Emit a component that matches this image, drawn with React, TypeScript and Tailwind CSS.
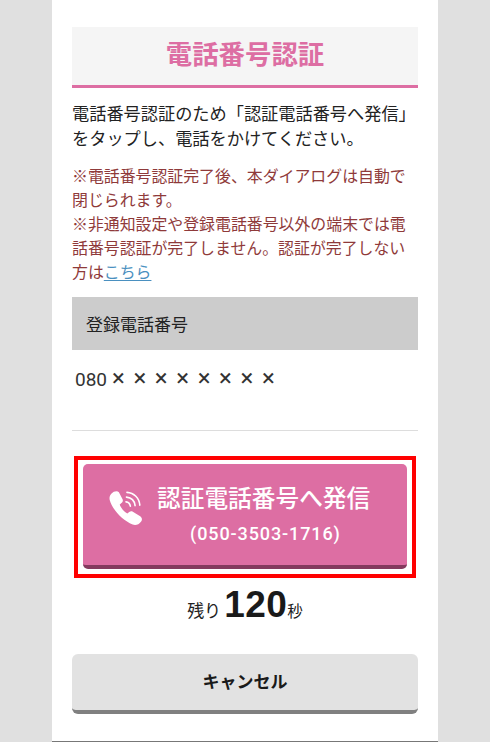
import React from "react";

const PhoneIcon = () => (
  <svg width="36" height="36" viewBox="0 0 36 38" className="shrink-0 mt-[26px]">
    {/* handset */}
    <path
      d="M2.5 4 C5 1.2 9 0.6 10.5 2.5 L14.5 10 C15 11.5 14.4 12.8 13.2 13.8 L11.4 15.4 C12 18 16 23.2 19.4 24.8 L21.4 23.2 C22.6 22.3 24 22.2 25.2 22.9 L33 27.6 C35 29 35.4 31.2 34 33.2 C31.6 36.6 28 37.6 25 36.4 C14 32 3.5 20.5 0.8 10.5 C0.2 8 1 5.6 2.5 4 Z"
      fill="#ffffff"
    />
    {/* signal arcs */}
    <path d="M18 12.5 C20.5 12.8 22.2 14.6 22.6 17" fill="none" stroke="#ffffff" strokeWidth="1.7" strokeLinecap="round" />
    <path d="M18.5 7.5 C23.5 8 27 11.5 27.6 16.5" fill="none" stroke="#ffffff" strokeWidth="1.7" strokeLinecap="round" />
    <path d="M19 2.5 C26.5 3 32 8.5 32.6 16" fill="none" stroke="#ffffff" strokeWidth="1.7" strokeLinecap="round" />
  </svg>
);

const App: React.FC = () => {
  return (
    <div className="w-[490px] h-[742px] overflow-hidden bg-[#e0e0e0] flex justify-center font-['Noto_Sans_CJK_JP','Noto_Sans',sans-serif]">
      <div className="w-[386px] h-[742px] bg-white px-5 pt-[27px] border-b border-[#777777] text-[#222222]">
        <div className="h-[61px] pb-[5px] bg-[#f5f5f5] border-b-[3px] border-[#dd6ea3] flex items-center justify-center text-[26.4px] leading-none font-bold text-[#dd6ea3]">
          電話番号認証
        </div>

        <p className="mt-[12px] text-[17.2px] leading-[25px] whitespace-nowrap [text-spacing-trim:space-all]">
          電話番号認証のため「認証電話番号へ発信」
          <br />
          をタップし、電話をかけてください。
        </p>

        <p className="mt-[14px] text-[15.9px] leading-[24px] text-[#8f3a3a] whitespace-nowrap">
          ※電話番号認証完了後、本ダイアログは自動で
          <br />
          閉じられます。
          <br />
          ※非通知設定や登録電話番号以外の端末では電
          <br />
          話番号認証が完了しません。認証が完了しない
          <br />
          方は<span className="text-[#4a90c0] underline underline-offset-2">こちら</span>
        </p>

        <div className="mt-[13px] h-[53px] bg-[#cccccc] flex items-center pl-[14px] text-[17px]">登録電話番号</div>

        <div className="h-[81px] border-b border-[#dddddd] pt-[14px] pl-[3px] text-[#333333] text-[19px] leading-[28px] whitespace-nowrap font-['Roboto','Noto_Sans_CJK_JP',sans-serif]">
          080<span className="ml-[5px] text-[24px] leading-[28px] tracking-[8.6px]">××××××××</span>
        </div>

        <div className="mt-[25px] mx-[2px] h-[122px] border-4 border-[#ff0000] px-[5px] pt-[4px]">
          <button className="w-full h-[105px] rounded-[5px] bg-[#dd6ea3] border-b-[4px] border-[#843a5e] flex items-start pl-[25px] gap-[13px] text-white">
            <PhoneIcon />
            <span className="flex flex-col items-start mt-[18px]">
              <span className="text-[23.7px] leading-[30px] font-medium whitespace-nowrap">認証電話番号へ発信</span>
              <span className="mt-[11px] ml-[33px] text-[18px] leading-[22px] font-medium tracking-[0.9px] font-['Roboto',sans-serif]">
                (050-3503-1716)
              </span>
            </span>
          </button>
        </div>

        <div className="h-[50px] pt-[4px] flex items-baseline justify-center">
          <span className="text-[17px] leading-[24px]">残り</span>
          <span className="ml-[3px] text-[37px] leading-[46px] tracking-[0.5px] font-bold text-[#1a1a1a] font-['Liberation_Sans',sans-serif]">120</span>
          <span className="text-[15.5px] leading-[24px]">秒</span>
        </div>

        <button className="mt-[26px] w-full h-[60px] rounded-[6px] bg-[#e2e2e2] border-b-[4px] border-[#808080] text-[17px] font-bold text-[#1a1a1a] flex items-center justify-center">
          <span className="-mt-[2px]">キャンセル</span>
        </button>
      </div>
    </div>
  );
};

export default App;
